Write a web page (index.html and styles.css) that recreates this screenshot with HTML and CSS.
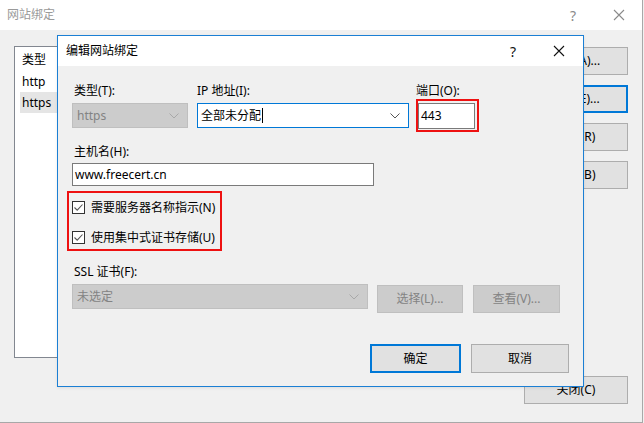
FILE: index.html
```html
<!DOCTYPE html>
<html lang="zh-CN">
<head>
<meta charset="utf-8">
<title>编辑网站绑定</title>
<link rel="stylesheet" href="styles.css">
</head>
<body>
<div class="back">
  <div class="back-title">
    <span class="back-caption">网站绑定</span>
    <span class="tb-btn back-help">?</span>
    <span class="tb-btn back-close"><svg width="12" height="12" viewBox="0 0 12 12"><path d="M1 1L11 11M11 1L1 11" stroke="#8a8a8a" stroke-width="1.1" fill="none"/></svg></span>
  </div>
  <div class="back-body">
    <div class="listbox">
      <div class="list-head">类型</div>
      <div class="list-row">http</div>
      <div class="list-row selected">https</div>
    </div>
    <div class="side-buttons">
      <div class="btn side">添加(A)...</div>
      <div class="btn side focused">编辑(E)...</div>
      <div class="btn side">删除(R)</div>
      <div class="btn side">浏览(B)</div>
    </div>
    <div class="spacer"></div>
    <div class="btn side close-btn">关闭(C)</div>
  </div>
</div>

<div class="dialog">
  <div class="dlg-title">
    <span class="dlg-caption">编辑网站绑定</span>
    <span class="tb-btn dlg-help">?</span>
    <span class="tb-btn dlg-close"><svg width="12" height="12" viewBox="0 0 12 12"><path d="M1 1L11 11M11 1L1 11" stroke="#111" stroke-width="1.1" fill="none"/></svg></span>
  </div>
  <div class="dlg-body">
    <div class="row1">
      <div class="field f-type">
        <label class="lbl">类型(T):</label>
        <div class="select disabled">
          <span class="sel-text">https</span>
          <svg class="chev" width="10" height="6" viewBox="0 0 10 6"><path d="M0.5 0.5L5 5L9.5 0.5" stroke="#a8a8a8" fill="none"/></svg>
        </div>
      </div>
      <div class="field f-ip">
        <label class="lbl lbl-flush">IP 地址(I):</label>
        <div class="select active">
          <span class="sel-text">全部未分配<span class="caret"></span></span>
          <svg class="chev" width="10" height="6" viewBox="0 0 10 6"><path d="M0.5 0.5L5 5L9.5 0.5" stroke="#555" fill="none"/></svg>
        </div>
      </div>
      <div class="field f-port">
        <label class="lbl lbl-tight">端口(O):</label>
        <div class="redbox port-box">
          <div class="input port">443</div>
        </div>
      </div>
    </div>

    <label class="lbl host-lbl">主机名(H):</label>
    <div class="input host">www.freecert.cn</div>

    <div class="redbox checks">
      <div class="check-row"><span class="checkbox"><svg width="11" height="11" viewBox="0 0 11 11"><path d="M1.5 5.5L4.2 8.2L9.5 2.5" stroke="#555" stroke-width="1.1" fill="none"/></svg></span><span>需要服务器名称指示(N)</span></div>
      <div class="check-row"><span class="checkbox"><svg width="11" height="11" viewBox="0 0 11 11"><path d="M1.5 5.5L4.2 8.2L9.5 2.5" stroke="#555" stroke-width="1.1" fill="none"/></svg></span><span>使用集中式证书存储(U)</span></div>
    </div>

    <label class="lbl ssl-lbl">SSL 证书(F):</label>
    <div class="ssl-row">
      <div class="select disabled ssl-select">
        <span class="sel-text">未选定</span>
        <svg class="chev" width="10" height="6" viewBox="0 0 10 6"><path d="M0.5 0.5L5 5L9.5 0.5" stroke="#a8a8a8" fill="none"/></svg>
      </div>
      <div class="btn disabled b-select">选择(L)...</div>
      <div class="btn disabled b-view">查看(V)...</div>
    </div>

    <div class="footer">
      <div class="btn ok">确定</div>
      <div class="btn cancel">取消</div>
    </div>
  </div>
</div>
</body>
</html>
```

FILE: styles.css
```css
* { box-sizing: border-box; }
html, body {
  margin: 0;
  padding: 0;
}
body {
  width: 644px;
  height: 423px;
  overflow: hidden;
  background: #f0f0f0;
  font-family: "Noto Sans", "Noto Sans CJK SC", sans-serif;
  font-size: 12px;
  color: #000;
  position: relative;
}

/* ---------- back window ---------- */
.back {
  width: 643px;
  height: 423px;
  border-right: 1px solid #a8a8a8;
  border-bottom: 1px solid #a8a8a8;
  display: flex;
  flex-direction: column;
  background: #f0f0f0;
}
.back-title {
  height: 30px;
  background: #fff;
  display: flex;
  align-items: center;
  padding-left: 7px;
  flex: none;
}
.back-caption {
  color: #9a9a9a;
  flex: 1;
  line-height: 16px;
}
.tb-btn {
  width: 46px;
  height: 30px;
  display: flex;
  align-items: center;
  justify-content: center;
  font-size: 14px;
}
.back-help { color: #8a8a8a; }
.back-body {
  flex: 1;
  display: grid;
  grid-template-columns: 1fr 104px;
  grid-template-rows: 312px 1fr;
  column-gap: 14px;
  padding: 16px 14px 18px 14px;
}
.listbox {
  background: #fff;
  border: 1px solid #828790;
  padding: 4px 0 0 5px;
}
.list-head {
  height: 20px;
  line-height: 18px;
  padding-left: 2px;
}
.list-row {
  height: 21px;
  line-height: 21px;
  padding-left: 2px;
}
.list-row.selected { background: #e5e5e5; }
.side-buttons {
  display: flex;
  flex-direction: column;
  gap: 10px;
  padding-top: 1px;
}
.btn {
  display: flex;
  align-items: center;
  justify-content: center;
  background: #e1e1e1;
  border: 1px solid #adadad;
  line-height: 16px;
}
.btn.side { height: 28px; }
.btn.focused { border: 2px solid #0078d7; }
.close-btn {
  grid-column: 2;
  align-self: end;
}
.spacer { grid-column: 1; }

/* ---------- dialog ---------- */
.dialog {
  position: absolute;
  left: 57px;
  top: 35px;
  width: 527px;
  height: 352px;
  border: 1px solid #1b7fd4;
  background: #f0f0f0;
  display: flex;
  flex-direction: column;
  box-shadow: 0 1px 3px rgba(0,0,0,0.08);
}
.dlg-title {
  height: 30px;
  background: #fff;
  display: flex;
  align-items: center;
  padding-left: 8px;
  flex: none;
}
.dlg-caption { flex: 1; line-height: 16px; }
.dlg-help { color: #111; }
.dlg-close { margin-right: 1px; }

.dlg-body {
  padding: 17px 0 0 14px;
  display: flex;
  flex-direction: column;
  align-items: flex-start;
}
.lbl {
  display: block;
  line-height: 16px;
  height: 16px;
  padding-left: 2px;
}
.lbl-flush { padding-left: 0; }

.row1 {
  display: flex;
  align-items: flex-start;
}
.field { display: flex; flex-direction: column; }
.field .lbl { margin-bottom: 4px; }
.field .lbl-tight { margin-bottom: 0; padding-left: 0; }
.f-type { width: 116px; }
.f-ip { width: 212px; margin-left: 9px; }
.f-port { margin-left: 7px; }

.select {
  height: 25px;
  display: flex;
  align-items: center;
  justify-content: space-between;
  padding: 0 8px 0 3px;
  line-height: 16px;
}
.select.disabled {
  background: #cccccc;
  border: 1px solid #bfbfbf;
  color: #838383;
  padding-left: 4px;
}
.select.active {
  background: #fff;
  border: 1px solid #0078d7;
}
.sel-text { display: flex; align-items: center; }
.caret {
  display: inline-block;
  width: 1px;
  height: 15px;
  background: #000;
  margin-left: 1px;
}

.redbox { border: 2px solid #ee1111; }
.port-box {
  width: 63px;
  height: 33px;
  padding: 2px 2px 2px 0;
}
.input {
  background: #fff;
  border: 1px solid #7a7a7a;
  line-height: 16px;
  display: flex;
  align-items: center;
  padding-left: 2px;
}
.port { width: 57px; height: 26px; }

.host-lbl { margin-top: 12px; }
.host { width: 302px; height: 23px; margin-top: 3px; }

.checks {
  margin-top: 5px;
  margin-left: -5px;
  width: 155px;
  height: 60px;
  padding: 8px 0 0 3px;
  display: flex;
  flex-direction: column;
  gap: 17px;
}
.check-row {
  display: flex;
  align-items: center;
  height: 13px;
  line-height: 16px;
}
.checkbox {
  width: 13px;
  height: 13px;
  border: 1px solid #333;
  background: #fff;
  display: flex;
  align-items: center;
  justify-content: center;
  margin-right: 6px;
  flex: none;
}

.ssl-lbl { margin-top: 13px; }
.ssl-row {
  display: flex;
  align-items: flex-start;
  margin-top: 4px;
}
.ssl-select { width: 296px; }
.btn.disabled {
  background: #cccccc;
  border: 1px solid #bfbfbf;
  color: #838383;
  height: 28px;
  margin-top: 1px;
}
.b-select { width: 86px; margin-left: 9px; }
.b-view { width: 87px; margin-left: 10px; }

.footer {
  display: flex;
  align-self: stretch;
  justify-content: flex-end;
  padding-right: 14px;
  margin-top: 31px;
}
.btn.ok {
  width: 91px;
  height: 29px;
  border: 2px solid #0078d7;
}
.btn.cancel {
  width: 98px;
  height: 29px;
  margin-left: 10px;
}
```
